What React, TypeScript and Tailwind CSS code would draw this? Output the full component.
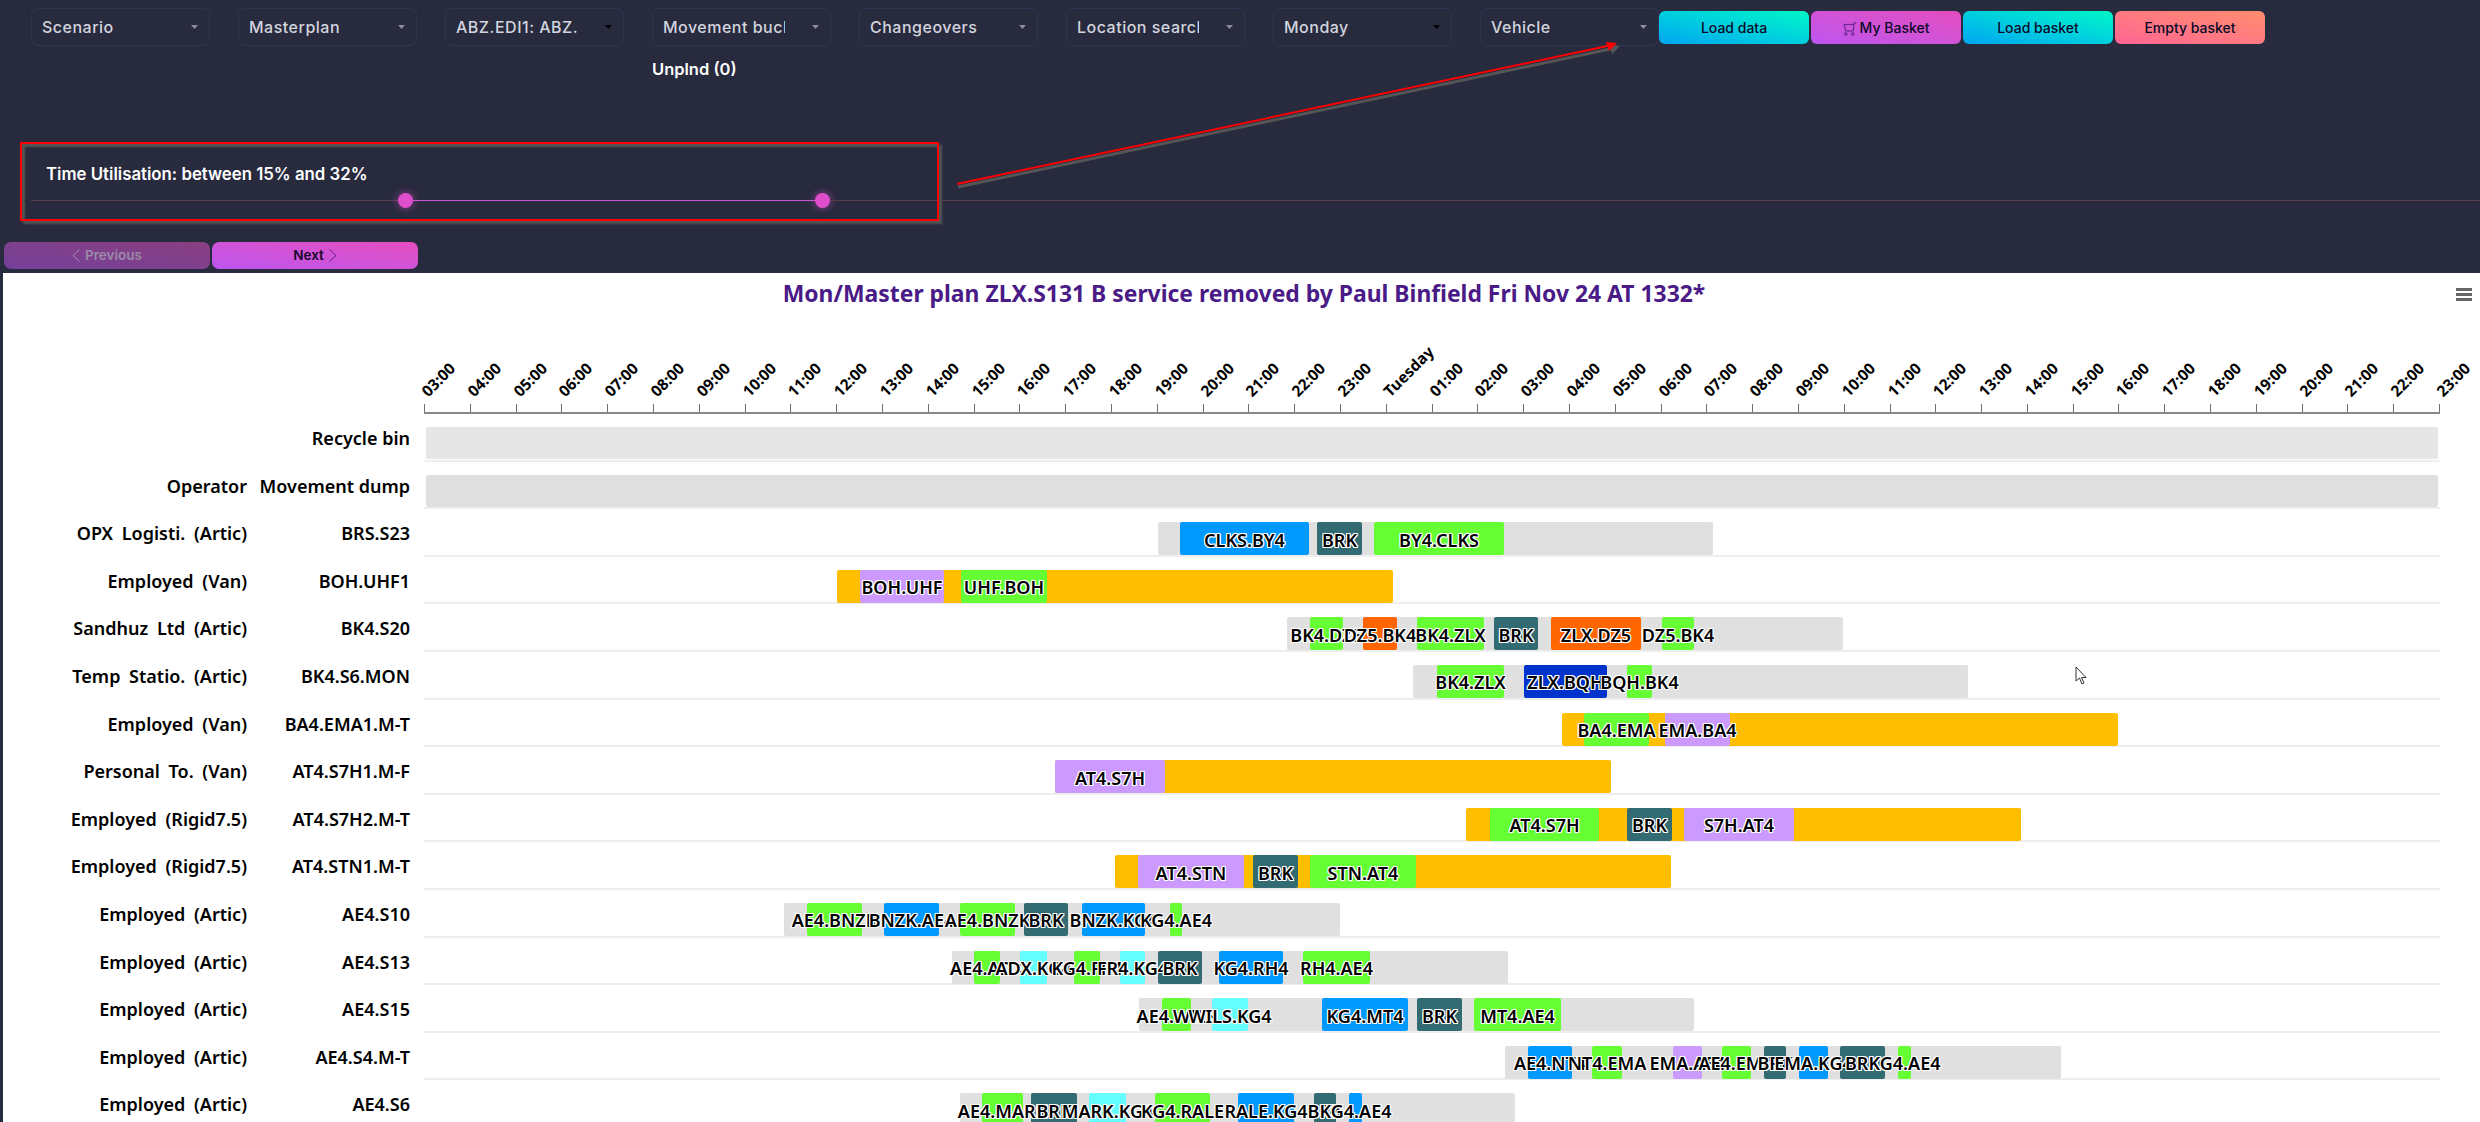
const dropdowns = [
  { label: 'Scenario' },
  { label: 'Masterplan' },
  { label: 'ABZ.EDI1: ABZ.EDI1', dark: true },
  { label: 'Movement bucket' },
  { label: 'Changeovers' },
  { label: 'Location search' },
  { label: 'Monday', dark: true },
  { label: 'Vehicle' },
];

const basketButtons = [
  { label: 'Load data', className: 'bg-gradient-to-tr from-[#00a5f0] to-[#00f7c6]' },
  { label: 'My Basket', className: 'bg-gradient-to-tr from-[#bd55f0] to-[#e44cbd]', cart: true },
  { label: 'Load basket', className: 'bg-gradient-to-tr from-[#00a5f0] to-[#00f7c6]' },
  { label: 'Empty basket', className: 'bg-gradient-to-tr from-[#ff6492] to-[#ff8d6c]' },
];

const hours = (from: number) =>
  Array.from({ length: 24 - from }, (_, i) => `${String(from + i).padStart(2, '0')}:00`);
const axisLabels = [...hours(3), 'Tuesday', ...hours(1)];

const colours = {
  idle: 'bg-[#e0e0e0]',
  wait: 'bg-[#ffbf00]',
  green: 'bg-[#66ff33]',
  blue: 'bg-[#0099ff]',
  navy: 'bg-[#0033cc]',
  brk: 'bg-[#336b73]',
  orange: 'bg-[#ff6600]',
  purple: 'bg-[#cc99ff]',
  cyan: 'bg-[#66ffff]',
};

type Colour = keyof typeof colours;
// x positions are page pixels, the track starts at 424
type Bar = [number, number, Colour, string?];
type Row = { operator?: string; name: string; bars: Bar[]; band?: string };

const rows: Row[] = [
  { name: 'Recycle bin', band: 'bg-[#e6e6e6]', bars: [] },
  { operator: 'Operator', name: 'Movement dump', band: 'bg-[#e0e0e0]', bars: [] },
  {
    operator: 'OPX Logisti. (Artic)',
    name: 'BRS.S23',
    bars: [
      [1158, 1713, 'idle'],
      [1180, 1309, 'blue', 'CLKS.BY4'],
      [1317, 1362, 'brk', 'BRK'],
      [1374, 1504, 'green', 'BY4.CLKS'],
    ],
  },
  {
    operator: 'Employed (Van)',
    name: 'BOH.UHF1',
    bars: [
      [837, 1393, 'wait'],
      [860, 944, 'purple', 'BOH.UHF'],
      [961, 1047, 'green', 'UHF.BOH'],
    ],
  },
  {
    operator: 'Sandhuz Ltd (Artic)',
    name: 'BK4.S20',
    bars: [
      [1287, 1843, 'idle'],
      [1310, 1343, 'green', 'BK4.DZ5'],
      [1363, 1397, 'orange', 'DZ5.BK4'],
      [1417, 1484, 'green', 'BK4.ZLX'],
      [1494, 1538, 'brk', 'BRK'],
      [1551, 1641, 'orange', 'ZLX.DZ5'],
      [1662, 1694, 'green', 'DZ5.BK4'],
    ],
  },
  {
    operator: 'Temp Statio. (Artic)',
    name: 'BK4.S6.MON',
    bars: [
      [1413, 1968, 'idle'],
      [1437, 1504, 'green', 'BK4.ZLX'],
      [1524, 1607, 'navy', 'ZLX.BQH'],
      [1627, 1652, 'green', 'BQH.BK4'],
    ],
  },
  {
    operator: 'Employed (Van)',
    name: 'BA4.EMA1.M-T',
    bars: [
      [1562, 2118, 'wait'],
      [1584, 1649, 'green', 'BA4.EMA'],
      [1665, 1730, 'purple', 'EMA.BA4'],
    ],
  },
  {
    operator: 'Personal To. (Van)',
    name: 'AT4.S7H1.M-F',
    bars: [
      [1055, 1611, 'wait'],
      [1055, 1165, 'purple', 'AT4.S7H'],
    ],
  },
  {
    operator: 'Employed (Rigid7.5)',
    name: 'AT4.S7H2.M-T',
    bars: [
      [1466, 2021, 'wait'],
      [1490, 1599, 'green', 'AT4.S7H'],
      [1627, 1672, 'brk', 'BRK'],
      [1684, 1794, 'purple', 'S7H.AT4'],
    ],
  },
  {
    operator: 'Employed (Rigid7.5)',
    name: 'AT4.STN1.M-T',
    bars: [
      [1115, 1671, 'wait'],
      [1138, 1244, 'purple', 'AT4.STN'],
      [1253, 1298, 'brk', 'BRK'],
      [1310, 1416, 'green', 'STN.AT4'],
    ],
  },
  {
    operator: 'Employed (Artic)',
    name: 'AE4.S10',
    bars: [
      [784, 1340, 'idle'],
      [807, 862, 'green', 'AE4.BNZK'],
      [884, 939, 'blue', 'BNZK.AE4'],
      [960, 1015, 'green', 'AE4.BNZK'],
      [1024, 1068, 'brk', 'BRK'],
      [1082, 1145, 'blue', 'BNZK.KG4'],
      [1170, 1182, 'green', 'KG4.AE4'],
    ],
  },
  {
    operator: 'Employed (Artic)',
    name: 'AE4.S13',
    bars: [
      [952, 1508, 'idle'],
      [974, 1000, 'green', 'AE4.ADX'],
      [1020, 1047, 'cyan', 'ADX.KG4'],
      [1074, 1100, 'green', 'KG4.FR4'],
      [1120, 1145, 'cyan', 'FR4.KG4'],
      [1158, 1202, 'brk', 'BRK'],
      [1219, 1283, 'blue', 'KG4.RH4'],
      [1303, 1370, 'green', 'RH4.AE4'],
    ],
  },
  {
    operator: 'Employed (Artic)',
    name: 'AE4.S15',
    bars: [
      [1139, 1694, 'idle'],
      [1162, 1191, 'green', 'AE4.WILS'],
      [1212, 1248, 'cyan', 'WILS.KG4'],
      [1322, 1408, 'blue', 'KG4.MT4'],
      [1417, 1462, 'brk', 'BRK'],
      [1474, 1561, 'green', 'MT4.AE4'],
    ],
  },
  {
    operator: 'Employed (Artic)',
    name: 'AE4.S4.M-T',
    bars: [
      [1505, 2061, 'idle'],
      [1528, 1572, 'blue', 'AE4.NT4'],
      [1592, 1622, 'green', 'NT4.EMA'],
      [1673, 1702, 'purple', 'EMA.AE4'],
      [1722, 1751, 'green', 'AE4.EMA'],
      [1764, 1786, 'brk', 'BRK'],
      [1799, 1828, 'blue', 'EMA.KG4'],
      [1840, 1885, 'brk', 'BRK'],
      [1898, 1911, 'green', 'KG4.AE4'],
    ],
  },
  {
    operator: 'Employed (Artic)',
    name: 'AE4.S6',
    bars: [
      [960, 1515, 'idle'],
      [982, 1023, 'green', 'AE4.MARK'],
      [1031, 1077, 'brk', 'BRK'],
      [1089, 1126, 'cyan', 'MARK.KG4'],
      [1155, 1210, 'green', 'KG4.RALE'],
      [1238, 1294, 'blue', 'RALE.KG4'],
      [1314, 1336, 'brk', 'BRK'],
      [1349, 1362, 'blue', 'KG4.AE4'],
    ],
  },
];

const Caret = ({ dark }: { dark?: boolean }) => (
  <svg width="7" height="4" viewBox="0 0 7 4" className={dark ? 'text-black' : 'text-[#8b8d9b]'}>
    <polygon points="0,0 7,0 3.5,4" fill="currentColor" />
  </svg>
);

const Cart = () => (
  <svg width="14" height="14" viewBox="0 0 14 14" fill="none" stroke="#5b1f86" strokeWidth="1" className="mr-[3px] mt-[3px]">
    <path d="M13.5 .8H11.2L10.4 9H2.6L1.2 2.4H11" />
    <circle cx="2.8" cy="12" r="1.3" />
    <circle cx="9.8" cy="12" r="1.3" />
  </svg>
);

const App = () => {
  return (
    <div className="relative h-[1122px] w-[2480px] overflow-hidden bg-[#282a3e] font-['Inter',sans-serif]">
      {/* Filters */}
      <div className="flex items-start pl-[31px] pt-2">
        <div className="flex gap-[28px]">
          {dropdowns.map((d) => (
            <div
              key={d.label}
              className="flex h-[38px] w-[179px] items-center justify-between rounded-[7px] border border-[#2f3553] pb-px pl-[10px] pr-[11px]"
            >
              <span className="w-[122px] overflow-hidden whitespace-nowrap text-[16px] font-medium tracking-[0.5px] text-[#d3d5de]">
                {d.label}
              </span>
              <Caret dark={d.dark} />
            </div>
          ))}
        </div>
        <div className="mt-[3px] flex gap-[2px]">
          {basketButtons.map((b) => (
            <button
              key={b.label}
              className={`flex h-[33px] w-[150px] items-center justify-center rounded-[6px] text-[14px] font-medium text-[#0a0a28] ${b.className}`}
            >
              {b.cart && <Cart />}
              {b.label}
            </button>
          ))}
        </div>
      </div>

      <div className="ml-[652px] mt-[13px] text-[16.5px] font-semibold leading-5 text-white">Unplnd (0)</div>

      {/* Time utilisation slider */}
      <div className="mt-[85px] h-[72px] border-b border-[#25273a] pl-[31px]">
        <div className="ml-[15px] text-[16.8px] font-semibold leading-5 text-white">
          Time Utilisation: between 15% and 32%
        </div>
        <div className="mt-[9px] flex h-[15px] items-center">
          <div className="h-px w-[367px] bg-[#5b3d4e]" />
          <div className="h-[15px] w-[15px] rounded-full bg-[#e04fcb] shadow-[0_0_6px_2px_rgba(224,79,203,0.35)]" />
          <div className="h-px w-[402px] bg-[#d055d0]" />
          <div className="h-[15px] w-[15px] rounded-full bg-[#e04fcb] shadow-[0_0_6px_2px_rgba(224,79,203,0.35)]" />
          <div className="h-px flex-1 bg-[#5b3d4e]" />
        </div>
      </div>

      {/* Paging */}
      <div className="ml-1 mt-[6px] flex gap-[2px]">
        <button className="flex h-[27px] w-[206px] items-center justify-center gap-[5px] rounded-[7px] bg-gradient-to-tr from-[#74409a] to-[#8a3e80] text-[13.5px] font-semibold text-[#9a8aa8]">
          <svg width="8" height="13" viewBox="0 0 8 13" fill="none" stroke="#a78db5" strokeWidth="1">
            <path d="M7.5 .5 1 6.5l6.5 6" />
          </svg>
          Previous
        </button>
        <button className="flex h-[27px] w-[206px] items-center justify-center gap-[5px] rounded-[7px] bg-gradient-to-tr from-[#bd55f0] to-[#e44cbd] text-[13.5px] font-semibold text-[#14082a]">
          Next
          <svg width="8" height="13" viewBox="0 0 8 13" fill="none" stroke="#5b1f86" strokeWidth="1">
            <path d="M.5 .5 7 6.5l-6.5 6" />
          </svg>
        </button>
      </div>

      {/* Chart */}
      <div className="ml-[3px] mt-1 h-[849px] bg-white font-['Noto_Sans',sans-serif] text-black">
        <div className="flex h-[42px] items-center pr-2">
          <h1 className="flex-1 pl-[29px] text-center text-[22.9px] font-bold text-[#4a1a87]">
            Mon/Master plan ZLX.S131 B service removed by Paul Binfield Fri Nov 24 AT 1332*
          </h1>
          <div className="flex w-4 flex-col gap-[2px]">
            <div className="h-[3px] bg-[#666666]" />
            <div className="h-[3px] bg-[#666666]" />
            <div className="h-[3px] bg-[#666666]" />
          </div>
        </div>

        <div className="ml-[421px] mt-[89px] flex h-[10px] w-[2016px] border-b-2 border-[#8a8a8a]">
          {axisLabels.map((label, i) => (
            <div
              key={i}
              className={`relative border-l border-[#707070] ${i === axisLabels.length - 1 ? 'w-0' : 'w-[45.8px]'}`}
            >
              <span className="absolute bottom-[13px] left-[5px] origin-bottom-left -rotate-45 whitespace-nowrap text-[15.5px] font-bold leading-none">
                {label}
              </span>
            </div>
          ))}
        </div>

        {rows.map((row) => (
          <div key={row.name} className="flex h-[47.6px] text-[18px] font-semibold">
            <div className="w-[244px] whitespace-nowrap pt-[12px] text-right leading-6 [word-spacing:4px]">{row.operator}</div>
            <div className="w-[163px] whitespace-nowrap pt-[12px] text-right leading-6">{row.name}</div>
            <div className="relative ml-[14px] w-[2016px] border-b-2 border-[#eeeeee]">
              {row.band && <div className={`absolute inset-x-[2px] top-[13px] h-[32px] rounded-[2px] ${row.band}`} />}
              {row.bars.map(([from, to, colour], i) => (
                <div
                  key={i}
                  className={`absolute top-[13px] h-[33px] rounded-[2px] ${colours[colour]}`}
                  style={{ left: from - 424, width: to - from }}
                />
              ))}
              {row.bars.map(
                ([from, to, , text], i) =>
                  text && (
                    <div
                      key={i}
                      className="absolute top-[14px] flex h-[33px] items-center justify-center whitespace-nowrap text-[18px] font-semibold leading-none [text-shadow:1px_0_0_#fff,-1px_0_0_#fff,0_1px_0_#fff,0_-1px_0_#fff,1px_1px_0_#fff,-1px_-1px_0_#fff,1px_-1px_0_#fff,-1px_1px_0_#fff]"
                      style={{ left: from - 424, width: to - from }}
                    >
                      {text}
                    </div>
                  ),
              )}
            </div>
          </div>
        ))}
      </div>

      {/* Red annotation drawn over the screenshot */}
      <div className="pointer-events-none absolute left-[20px] top-[142px] h-[79px] w-[919px] border-2 border-[#ff0000] shadow-[3px_3px_2px_#555555,inset_3px_3px_2px_#555555]" />
      <svg className="pointer-events-none absolute left-[950px] top-[35px]" width="680" height="160" viewBox="950 35 680 160" fill="none">
        <path d="M958 187 1615 48" stroke="#555555" strokeWidth="3" />
        <polygon points="1620,46 1609,45 1612,54" fill="#555555" />
        <path d="M957 184 1612 45" stroke="#ff0000" strokeWidth="2" />
        <polygon points="1617,43 1606,42 1609,51" fill="#ff0000" />
      </svg>

      {/* Mouse pointer */}
      <svg className="pointer-events-none absolute left-[2075px] top-[666px]" width="13" height="19" viewBox="0 0 13 19">
        <path d="M1 1v14l3.5-3 2.5 6 2-1-2.5-5.5H11z" fill="#ffffff" stroke="#333333" strokeWidth="1" />
      </svg>
    </div>
  );
};

export default App;
